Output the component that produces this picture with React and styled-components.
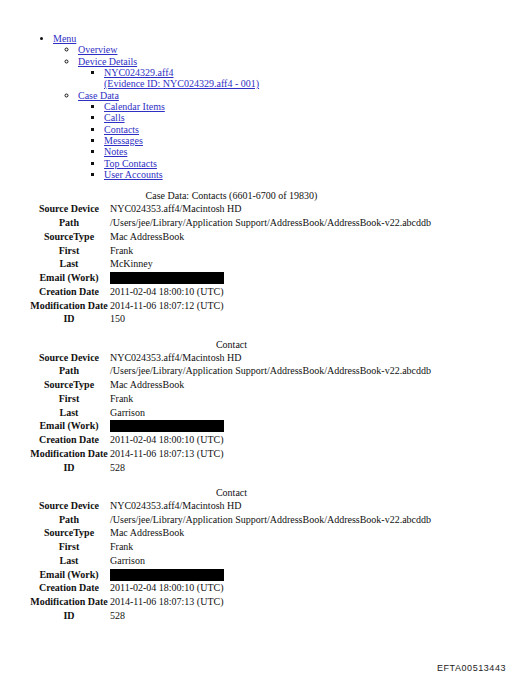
import React from "react";
import styled, { createGlobalStyle } from "styled-components";

const Global = createGlobalStyle`
  html, body { margin: 0; padding: 0; background: #fff; }
  body { font-family: "Liberation Serif", "Times New Roman", serif; color: #111; }
`;

const Page = styled.div`
  width: 512px;
  min-height: 678px;
  box-sizing: border-box;
  display: flex;
  flex-direction: column;
  padding-top: 33px;
  font-size: 10px;
`;

const List = styled.ul`
  margin: 0;
  padding-left: ${(p) => p.$indent}px;
  list-style-type: ${(p) => p.$type};
  line-height: 11.33px;
`;

const Item = styled.li`
  margin: 0;
`;

const Link = styled.a`
  color: #2f2fc4;
  text-decoration: underline;
`;

const Section = styled.section`
  margin-left: 30px;
  width: 403px;
  margin-top: ${(p) => p.$top}px;
`;

const Caption = styled.div`
  text-align: center;
  line-height: 13px;
`;

const Grid = styled.div`
  display: grid;
  grid-template-columns: 78px auto;
  column-gap: 2px;
  line-height: 13.75px;
`;

const Label = styled.div`
  font-weight: bold;
  text-align: center;
  white-space: nowrap;
`;

const Value = styled.div`
  white-space: nowrap;
  display: flex;
  align-items: center;
`;

const Redact = styled.span`
  display: inline-block;
  width: 114px;
  height: 12px;
  background: #000;
`;

const Footer = styled.div`
  margin-top: auto;
  align-self: flex-end;
  padding: 0 6px 4px 0;
  font-family: "Liberation Sans", Arial, sans-serif;
  font-size: 9px;
  letter-spacing: 0.55px;
  line-height: 12px;
  color: #222;
`;

const records = [
  { caption: "Case Data: Contacts (6601-6700 of 19830)", last: "McKinney", mod: "2014-11-06 18:07:12 (UTC)", id: "150", top: 9 },
  { caption: "Contact", last: "Garrison", mod: "2014-11-06 18:07:13 (UTC)", id: "528", top: 11.6 },
  { caption: "Contact", last: "Garrison", mod: "2014-11-06 18:07:13 (UTC)", id: "528", top: 11.6 },
];

function Record({ r }) {
  const rows = [
    ["Source Device", "NYC024353.aff4/Macintosh HD"],
    ["Path", "/Users/jee/Library/Application Support/AddressBook/AddressBook-v22.abcddb"],
    ["SourceType", "Mac AddressBook"],
    ["First", "Frank"],
    ["Last", r.last],
    ["Email (Work)", null],
    ["Creation Date", "2011-02-04 18:00:10 (UTC)"],
    ["Modification Date", r.mod],
    ["ID", r.id],
  ];
  return (
    <Section $top={r.top}>
      <Caption>{r.caption}</Caption>
      <Grid>
        {rows.map(([k, v]) => (
          <React.Fragment key={k}>
            <Label>{k}</Label>
            <Value>{v === null ? <Redact /> : v}</Value>
          </React.Fragment>
        ))}
      </Grid>
    </Section>
  );
}

export default function App() {
  return (
    <Page>
      <Global />
      <List $indent={53} $type="disc">
        <Item>
          <Link href="#">Menu</Link>
          <List $indent={25} $type="circle">
            <Item><Link href="#">Overview</Link></Item>
            <Item>
              <Link href="#">Device Details</Link>
              <List $indent={26} $type="square">
                <Item>
                  <Link href="#">NYC024329.aff4<br />(Evidence ID: NYC024329.aff4 - 001)</Link>
                </Item>
              </List>
            </Item>
            <Item>
              <Link href="#">Case Data</Link>
              <List $indent={26} $type="square">
                {["Calendar Items", "Calls", "Contacts", "Messages", "Notes", "Top Contacts", "User Accounts"].map((t) => (
                  <Item key={t}><Link href="#">{t}</Link></Item>
                ))}
              </List>
            </Item>
          </List>
        </Item>
      </List>
      {records.map((r, i) => (
        <Record key={i} r={r} />
      ))}
      <Footer>EFTA00513443</Footer>
    </Page>
  );
}
